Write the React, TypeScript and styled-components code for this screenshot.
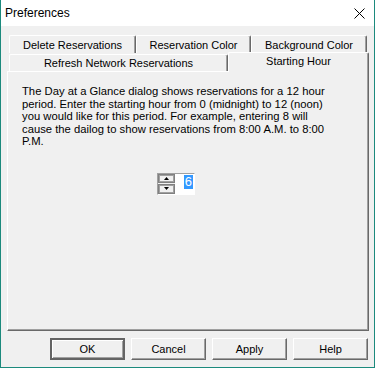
import styled, { createGlobalStyle } from 'styled-components'

const Global = createGlobalStyle`
  html, body { margin: 0; padding: 0; background: #f0f0f0; overflow: hidden; }
  * { box-sizing: border-box; }
`

const Window = styled.div`
  width: 375px;
  height: 368px;
  border: 1px solid #1c8a7d;
  border-top: none;
  background: #f0f0f0;
  display: flex;
  flex-direction: column;
  font-family: "Liberation Sans", Arial, sans-serif;
  font-size: 11px;
  color: #000;
`

const TitleBar = styled.div`
  height: 26px;
  background: #fff;
  display: flex;
  align-items: center;
  justify-content: space-between;
  padding: 0 9px 0 4px;
  font-size: 12px;
`

const Body = styled.div`
  display: flex;
  flex-direction: column;
  padding: 9px 5px 0 6px;
`

const TabRow = styled.div<{ $h: number }>`
  display: flex;
  align-items: flex-end;
  padding-left: 2px;
  height: ${(p) => p.$h}px;
`

const Tab = styled.div<{ $w: number; $active?: boolean }>`
  width: ${(p) => p.$w}px;
  height: ${(p) => (p.$active ? 20 : 17)}px;
  display: flex;
  align-items: center;
  justify-content: center;
  padding-bottom: ${(p) => (p.$active ? 3 : 0)}px;
  background: #f0f0f0;
  border-top: 1px solid #fff;
  border-left: 1px solid #fff;
  border-right: 1px solid #696969;
  box-shadow: inset -1px 0 0 #a0a0a0;
  border-top-left-radius: 2px;
  border-top-right-radius: 2px;
  white-space: nowrap;
  ${(p) => (p.$active ? 'position: relative; z-index: 1; margin-bottom: -1px;' : '')}
`

const TopTab = styled(Tab)`
  height: 18px;
  margin-bottom: 1px;
`

const Panel = styled.div`
  height: 260px;
  border-top: 1px solid #fff;
  border-left: 1px solid #fff;
  border-right: 1px solid #696969;
  border-bottom: 1px solid #696969;
  box-shadow: inset -1px -1px 0 #a0a0a0;
  padding: 13px 0 0 14px;
  display: flex;
  flex-direction: column;
`

const Info = styled.p`
  margin: 0;
  font-size: 11.25px;
  line-height: 12.5px;
  white-space: nowrap;
`

const Spinner = styled.div`
  margin: 25px 0 0 135px;
  width: 38px;
  height: 22px;
  display: flex;
  border-top: 1px solid #a0a0a0;
  border-left: 1px solid #a0a0a0;
  border-right: 1px solid #fff;
  border-bottom: 1px solid #fff;
  background: #fff;
`

const SpinButtons = styled.div`
  width: 17px;
  display: flex;
  flex-direction: column;
  gap: 1px;
  background: #f0f0f0;
`

const SpinButton = styled.div`
  flex: 1;
  background: #f0f0f0;
  border: 1px solid #808080;
  box-shadow: inset 1px 1px 0 #a0a0a0, inset -1px -1px 0 #a0a0a0;
  display: flex;
  align-items: center;
  justify-content: center;
`

const Field = styled.div`
  flex: 1;
  display: flex;
  justify-content: flex-end;
  align-items: flex-start;
  padding: 1px 1px 0 0;
`

const Selected = styled.span`
  background: #3399ff;
  color: #fff;
  font-size: 13px;
  line-height: 14px;
  padding: 0 1px;
`

const Footer = styled.div`
  display: flex;
  justify-content: flex-end;
  gap: 6px;
  margin-top: 7px;
  padding-right: 1px;
`

const Button = styled.button<{ $default?: boolean }>`
  width: 75px;
  height: 22px;
  font: inherit;
  color: #000;
  background: #f0f0f0;
  padding: 0;
  border: 1px solid #fff;
  border-right-color: #696969;
  border-bottom-color: #696969;
  box-shadow: inset -1px -1px 0 #a0a0a0;
  ${(p) =>
    p.$default
      ? 'border: 2px solid #646464; box-shadow: inset 1px 1px 0 #fff, inset -1px -1px 0 #a0a0a0;'
      : ''}
`

export default function App() {
  return (
    <Window>
      <Global />
      <TitleBar>
        <span>Preferences</span>
        <svg width="11" height="11" viewBox="0 0 11 11">
          <path d="M0.5 0.5L10.5 10.5M10.5 0.5L0.5 10.5" stroke="#000" strokeWidth="1" />
        </svg>
      </TitleBar>
      <Body>
        <TabRow $h={19}>
          <TopTab $w={127}>Delete Reservations</TopTab>
          <TopTab $w={115}>Reservation Color</TopTab>
          <TopTab $w={116}>Background Color</TopTab>
        </TabRow>
        <TabRow $h={17}>
          <Tab $w={219}>Refresh Network Reservations</Tab>
          <Tab $w={141} $active>Starting Hour</Tab>
        </TabRow>
        <Panel>
          <Info>
            The Day at a Glance dialog shows reservations for a 12 hour
            <br />
            period. Enter the starting hour from 0 (midnight) to 12 (noon)
            <br />
            you would like for this period. For example, entering 8 will
            <br />
            cause the dailog to show reservations from 8:00 A.M. to 8:00
            <br />
            P.M.
          </Info>
          <Spinner>
            <SpinButtons>
              <SpinButton>
                <svg width="5" height="3" viewBox="0 0 5 3"><path d="M2.5 0L5 3H0z" fill="#000" /></svg>
              </SpinButton>
              <SpinButton>
                <svg width="5" height="3" viewBox="0 0 5 3"><path d="M0 0H5L2.5 3z" fill="#000" /></svg>
              </SpinButton>
            </SpinButtons>
            <Field>
              <Selected>6</Selected>
            </Field>
          </Spinner>
        </Panel>
        <Footer>
          <Button $default>OK</Button>
          <Button>Cancel</Button>
          <Button>Apply</Button>
          <Button>Help</Button>
        </Footer>
      </Body>
    </Window>
  )
}
